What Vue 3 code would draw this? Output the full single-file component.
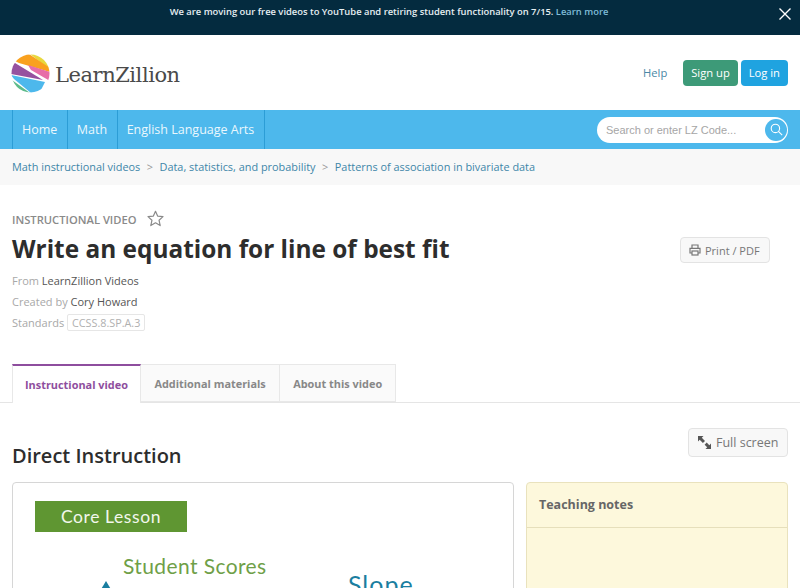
<template>
  <div class="page">
    <div class="banner">
      <p>We are moving our free videos to YouTube and retiring student functionality on 7/15. <a>Learn more</a></p>
      <svg class="banner-close" width="12" height="12" viewBox="0 0 12 12">
        <path d="M.5 .5 11.5 11.5M11.5 .5 .5 11.5" stroke="#fff" stroke-width="1.4" fill="none" />
      </svg>
    </div>

    <header class="top">
      <div class="logo">
        <svg width="39" height="39" viewBox="0 0 39 39">
          <defs>
            <clipPath id="disc"><circle cx="19.5" cy="19.5" r="19" /></clipPath>
          </defs>
          <g clip-path="url(#disc)">
            <path d="M19 0 29 0 39 11 38 15Z" fill="#e8d83e" />
            <path d="M4 7 12 0 18 0 39 14 39 18 8 9Z" fill="#f9a11f" />
            <path d="M17 11 39 18 39 27 20 16Z" fill="#e76ea8" />
            <path d="M0 11 4 9 32 26 0 20Z" fill="#96519f" />
            <path d="M0 21 34 28 29 38 20 39 3 25Z" fill="#4db8ec" />
            <path d="M1 26 19 39 9 39 2 32Z" fill="#5dbb8a" />
          </g>
        </svg>
        <span class="logo-name">LearnZillion</span>
      </div>
      <div class="top-actions">
        <a class="help">Help</a>
        <a class="btn-top green">Sign up</a>
        <a class="btn-top blue">Log in</a>
      </div>
    </header>

    <nav class="nav">
      <div class="nav-links">
        <a v-for="link in navLinks" :key="link">{{ link }}</a>
      </div>
      <div class="search">
        <span class="search-text">Search or enter LZ Code...</span>
        <span class="search-go">
          <svg width="13" height="13" viewBox="0 0 13 13" fill="none" stroke="#fff" stroke-width="1.1">
            <circle cx="5.4" cy="5.4" r="4.2" />
            <path d="M8.4 8.4 12.2 12.2" />
          </svg>
        </span>
      </div>
    </nav>

    <div class="crumbs">
      <template v-for="(c, i) in crumbs" :key="c">
        <span v-if="i" class="sep">&gt;</span>
        <a>{{ c }}</a>
      </template>
    </div>

    <main class="content">
      <div class="kicker">
        <span>INSTRUCTIONAL VIDEO</span>
        <svg width="17" height="17" viewBox="0 0 24 24" fill="none" stroke="#8a8a8a" stroke-width="1.7" stroke-linejoin="round">
          <path d="M12 1.8 15 8.6 22.6 9.4 17 14.4 18.6 22 12 18.1 5.4 22 7 14.4 1.4 9.4 9 8.6Z" />
        </svg>
      </div>
      <div class="title-row">
        <h1>Write an equation for line of best fit</h1>
        <a class="btn-light print">
          <svg width="12" height="12" viewBox="0 0 12 12" fill="none" stroke="#777" stroke-width="1.2">
            <path d="M3 4V1h6v3M3 9H1V4.4h10V9H9" />
            <rect x="3" y="7" width="6" height="4" />
          </svg>
          Print / PDF
        </a>
      </div>
      <div class="meta-list">
        <div class="meta"><span>From</span> LearnZillion Videos</div>
        <div class="meta"><span>Created by</span> Cory Howard</div>
        <div class="meta"><span>Standards</span> <em class="std">CCSS.8.SP.A.3</em></div>
      </div>

      <div class="tabs">
        <a v-for="(t, i) in tabs" :key="t" class="tab" :class="{ active: i === 0 }">{{ t }}</a>
      </div>

      <div class="section-head">
        <h2>Direct Instruction</h2>
        <a class="btn-light full">
          <svg width="13" height="13" viewBox="0 0 13 13" fill="#555">
            <path d="M0 0H5.5L3.8 1.7 7 4.9 4.9 7 1.7 3.8 0 5.5Z" />
            <path d="M13 13H7.5L9.2 11.3 6.6 8.7 8.7 6.6 11.3 9.2 13 7.5Z" />
          </svg>
          Full screen
        </a>
      </div>

      <div class="panels">
        <div class="video">
          <div class="slide-tag">Core Lesson</div>
          <div class="slide-title">Student Scores</div>
          <div class="slide-slope">Slope</div>
          <svg class="slide-arrow" width="16" height="10" viewBox="0 0 16 10"><path d="M8 0 14 10H2Z" fill="#1a7ea0" /></svg>
        </div>
        <aside class="notes">
          <div class="notes-head">Teaching notes</div>
        </aside>
      </div>
    </main>
  </div>
</template>

<script setup>
const navLinks = ['Home', 'Math', 'English Language Arts']
const crumbs = ['Math instructional videos', 'Data, statistics, and probability', 'Patterns of association in bivariate data']
const tabs = ['Instructional video', 'Additional materials', 'About this video']
</script>

<style>
html, body {
  margin: 0;
  background: #fff;
  overflow: hidden;
}
</style>

<style scoped>
.page {
  width: 800px;
  height: 588px;
  overflow: hidden;
  font-family: "Open Sans", "Liberation Sans", sans-serif;
  color: #333;
}

.banner {
  height: 35px;
  background: #042b3f;
  color: #e6eef2;
  display: flex;
  justify-content: center;
  position: relative;
  font-size: 9.4px;
  font-weight: 600;
}

.banner p {
  margin: 4px 0 0 -22px;
  line-height: 15px;
}

.banner a {
  color: #7fbcd8;
}

.banner-close {
  position: absolute;
  right: 9px;
  top: 8px;
}

.top {
  height: 75px;
  display: flex;
  justify-content: space-between;
  box-sizing: border-box;
  padding: 19px 12px 0 11px;
}

.logo {
  display: flex;
  align-items: flex-start;
  gap: 5px;
}

.logo-name {
  font-family: "DejaVu Serif", "Liberation Serif", serif;
  font-size: 21px;
  line-height: 42px;
  color: #4a4a4a;
  letter-spacing: -0.45px;
}

.top-actions {
  display: flex;
  align-items: flex-start;
  padding-top: 6px;
  font-size: 11.2px;
}

.help {
  color: #4a87a6;
  margin-right: 16px;
  line-height: 26px;
}

.btn-top {
  height: 26px;
  line-height: 26px;
  padding: 0 8px;
  border-radius: 4px;
  color: #fff;
}

.green {
  background: #3d9a78;
  margin-right: 3px;
}

.blue {
  background: #1fa3e0;
}

.nav {
  height: 39px;
  background: #4db8ec;
  display: flex;
  justify-content: space-between;
  align-items: center;
  padding: 0 12px;
}

.nav-links {
  display: flex;
  align-self: stretch;
  border-left: 1px solid #2c9dd6;
}

.nav-links a {
  display: block;
  padding: 0 9.5px 0 9px;
  line-height: 39px;
  font-size: 12.5px;
  color: #eaf7fd;
  border-right: 1px solid #2c9dd6;
}

.search {
  width: 191px;
  height: 26px;
  box-sizing: border-box;
  background: #fff;
  border-radius: 13px;
  display: flex;
  align-items: center;
  justify-content: space-between;
  padding: 0 1px 0 9px;
}

.search-text {
  font-family: "Liberation Sans", sans-serif;
  font-size: 11px;
  color: #a6a6a6;
}

.search-go {
  width: 22px;
  height: 22px;
  border-radius: 50%;
  background: #4db8ec;
  display: flex;
  align-items: center;
  justify-content: center;
}

.crumbs {
  height: 36px;
  box-sizing: border-box;
  padding: 0 12px 2px;
  background: #f8f8f8;
  display: flex;
  align-items: center;
  font-size: 10.9px;
  color: #3d86a8;
}

.sep {
  color: #999;
  margin: 0 6.5px;
}

.content {
  padding: 0 12px;
}

.kicker {
  display: flex;
  align-items: center;
  gap: 10px;
  margin-top: 25px;
  height: 17px;
  font-size: 11.2px;
  font-weight: 600;
  color: #8a8a8a;
}

.kicker span {
  padding-top: 2px;
}

.title-row {
  display: flex;
  justify-content: space-between;
  align-items: center;
  margin-top: 5px;
}

h1 {
  margin: 0;
  font-size: 24.4px;
  line-height: 33px;
  font-weight: 700;
  color: #2d2d2d;
}

.btn-light {
  display: flex;
  align-items: center;
  box-sizing: border-box;
  background: #f8f8f8;
  border: 1px solid #e3e3e3;
  border-radius: 4px;
  color: #777;
}

.print {
  width: 90px;
  height: 26px;
  margin: 3px 18px 0 0;
  padding-left: 8px;
  gap: 4px;
  font-size: 11px;
}

.meta-list {
  margin-top: 5px;
}

.meta {
  font-size: 11px;
  line-height: 21px;
  color: #555;
}

.meta span {
  color: #a8a8a8;
}

.std {
  font-style: normal;
  font-size: 10.8px;
  color: #b0b0b0;
  border: 1px solid #e6e6e6;
  border-radius: 2px;
  padding: 0 4px;
}

.tabs {
  display: flex;
  box-sizing: border-box;
  margin: 31px -12px 0;
  padding-left: 12px;
  border-bottom: 1px solid #e5e5e5;
  height: 39px;
}

.tab {
  box-sizing: border-box;
  height: 38px;
  line-height: 37px;
  padding: 0 13px 0 13.5px;
  font-size: 10.9px;
  font-weight: 700;
  color: #888;
  background: #fafafa;
  border: 1px solid #e8e8e8;
  border-left: 0;
}

.tab.active {
  height: 39px;
  padding: 0 12px;
  color: #8e4e9e;
  background: #fff;
  border-top: 2px solid #8e4e9e;
  border-bottom: 0;
  border-left: 1px solid #e8e8e8;
}

.section-head {
  display: flex;
  justify-content: space-between;
  align-items: flex-start;
  margin-top: 25px;
}

h2 {
  margin: 15px 0 0;
  font-size: 20px;
  line-height: 26px;
  font-weight: 600;
  color: #2d2d2d;
}

.full {
  width: 100px;
  height: 29px;
  padding-left: 9px;
  gap: 5px;
  font-size: 12.5px;
}

.panels {
  display: grid;
  grid-template-columns: 502px 262px;
  gap: 12px;
  margin-top: 13px;
}

.video {
  height: 200px;
  box-sizing: border-box;
  border: 1px solid #d6d6d6;
  border-radius: 4px;
  position: relative;
  overflow: hidden;
  font-family: "Lato", "Open Sans", sans-serif;
}

.slide-tag {
  position: absolute;
  left: 22px;
  top: 18px;
  width: 152px;
  height: 31px;
  line-height: 31px;
  background: #5f9632;
  color: #f2f7ec;
  text-align: center;
  font-size: 17.5px;
  letter-spacing: 0.6px;
}

.slide-title {
  position: absolute;
  left: 110px;
  top: 70px;
  font-size: 21px;
  color: #6f9f48;
  letter-spacing: 0.4px;
}

.slide-slope {
  position: absolute;
  left: 335px;
  top: 86px;
  font-size: 25px;
  color: #1a7ea0;
  letter-spacing: 1px;
}

.slide-arrow {
  position: absolute;
  left: 85px;
  top: 98px;
}

.notes {
  height: 200px;
  box-sizing: border-box;
  background: #fdf8dc;
  border: 1px solid #e9e2bd;
  border-radius: 4px;
}

.notes-head {
  box-sizing: border-box;
  height: 45px;
  line-height: 44px;
  padding-left: 12px;
  font-size: 12.5px;
  font-weight: 700;
  color: #666;
  border-bottom: 1px solid #e6dfbb;
}
</style>
